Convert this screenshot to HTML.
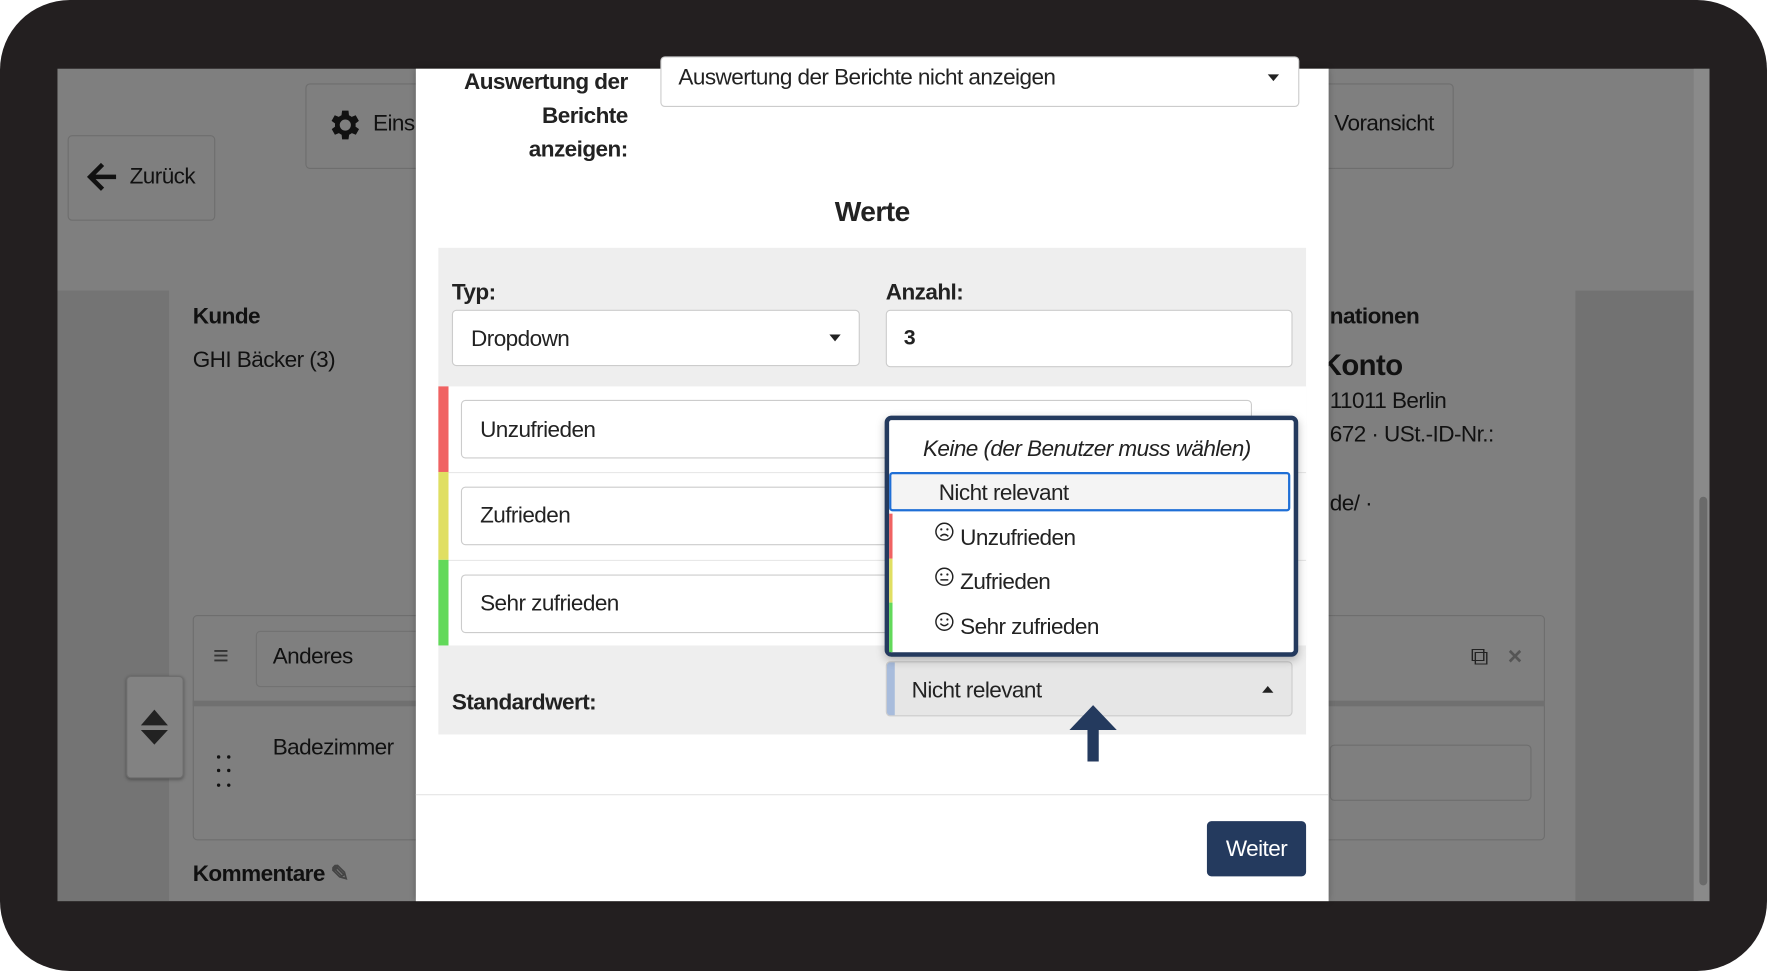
<!DOCTYPE html>
<html><head><meta charset="utf-8"><style>
html,body{margin:0;padding:0;background:#fff;width:1767px;height:971px;overflow:hidden}
#w{position:absolute;left:0;top:0;width:1568px;height:862px;transform:scale(1.12691,1.12645);transform-origin:0 0;font-family:"Liberation Sans",sans-serif;letter-spacing:-0.5px}
.a{position:absolute}
.t{position:absolute;font-size:20px;color:#222;white-space:nowrap;line-height:24px}
.b{font-weight:bold}
.box{position:absolute;border:1px solid #ccc;border-radius:4px;background:#fff;box-sizing:border-box}
.gb{position:absolute;border:1px solid #6e6e6e;border-radius:4px;box-sizing:border-box}
.car{position:absolute;width:0;height:0;border-left:5px solid transparent;border-right:5px solid transparent;border-top:6px solid #222}
.ic{position:absolute;font-family:"DejaVu Sans",sans-serif;font-size:16px;color:#222;line-height:20px}
</style></head><body><div id="w">
<div class="a" style="left:0;top:0;width:1568px;height:862px;background:#231f20;border-radius:62px"></div>
<div class="a" style="left:51px;top:61px;width:1466px;height:739px;background:#7f7f7f;overflow:hidden">
 <div class="a" style="left:0;top:197px;width:99px;height:542px;background:#747474"></div>
 <div class="a" style="left:1347px;top:197px;width:105px;height:542px;background:#727272"></div>
 <div class="a" style="left:1452px;top:0;width:14px;height:739px;background:#8a8a8a"></div>
 <div class="a" style="left:1457px;top:380px;width:7px;height:345px;background:#6a6a6a;border-radius:4px"></div>
</div>
<div class="gb" style="left:60px;top:120px;width:131px;height:76px"></div>
<svg class="a" style="left:76px;top:142px" width="30" height="30" viewBox="0 0 30 30"><path d="M27 15H5M15 4L4 15l11 11" stroke="#111" stroke-width="4" fill="none"/></svg>
<div class="t" style="left:115px;top:145px;color:#111">Zurück</div>
<div class="gb" style="left:271px;top:74px;width:120px;height:76px"></div>
<svg class="a" style="left:288px;top:94px" width="34" height="34" viewBox="0 0 24 24"><path fill="#111" d="M19.4 13a7.5 7.5 0 000-2l2.1-1.6-2-3.5-2.5 1a7 7 0 00-1.7-1L15 3h-4l-.4 2.9a7 7 0 00-1.7 1l-2.5-1-2 3.5L6.6 11a7.5 7.5 0 000 2l-2.1 1.6 2 3.5 2.5-1a7 7 0 001.7 1L11 21h4l.4-2.9a7 7 0 001.7-1l2.5 1 2-3.5zM13 15.5a3.5 3.5 0 110-7 3.5 3.5 0 010 7z"/></svg>
<div class="t" style="left:331px;top:98px;color:#111">Eins</div>
<div class="gb" style="left:1150px;top:74px;width:140px;height:76px"></div>
<div class="t" style="left:1184px;top:98px;color:#111">Voransicht</div>
<div class="t b" style="left:171px;top:269px;color:#111">Kunde</div>
<div class="t" style="left:171px;top:308px;color:#111">GHI Bäcker (3)</div>
<div class="t b" style="left:1180px;top:269px;color:#111">nationen</div>
<div class="t b" style="left:1172px;top:309px;color:#111;font-size:26px;line-height:30px">Konto</div>
<div class="t" style="left:1180px;top:344px;color:#111">11011 Berlin</div>
<div class="t" style="left:1180px;top:374px;color:#111">672 · USt.-ID-Nr.:</div>
<div class="t" style="left:1180px;top:435px;color:#111">de/ ·</div>
<div class="gb" style="left:171px;top:546px;width:1200px;height:200px"></div>
<div class="a" style="left:171px;top:622px;width:1200px;height:5px;background:#707070"></div>
<div class="t" style="left:189px;top:571px;color:#333;font-size:24px">≡</div>
<div class="gb" style="left:227px;top:560px;width:160px;height:50px;border-color:#727272"></div>
<div class="t" style="left:242px;top:571px;color:#111">Anderes</div>
<div class="t" style="left:242px;top:652px;color:#111">Badezimmer</div>
<svg class="a" style="left:192px;top:670px" width="14" height="32"><g fill="#111"><circle cx="2" cy="2" r="1.5"/><circle cx="11" cy="2" r="1.5"/><circle cx="2" cy="14" r="1.5"/><circle cx="11" cy="14" r="1.5"/><circle cx="2" cy="27" r="1.5"/><circle cx="11" cy="27" r="1.5"/></g></svg>
<div class="gb" style="left:1180px;top:661px;width:179px;height:50px"></div>
<div class="t" style="left:1305px;top:571px;color:#222;font-size:22px">⧉</div>
<div class="t b" style="left:1338px;top:571px;color:#555;font-size:22px">×</div>
<div class="gb" style="left:112px;top:600px;width:51px;height:91px;background:#828282;box-shadow:0 1px 3px rgba(0,0,0,.3)"></div>
<svg class="a" style="left:124px;top:628px" width="26" height="36"><path d="M1 16L13 2l12 14zM1 20h24L13 33z" fill="#222"/></svg>
<div class="t b" style="left:171px;top:764px;color:#111">Kommentare <span style="color:#444">✎</span></div>
<div class="a" style="left:369px;top:61px;width:810px;height:739px;background:#fff;box-shadow:0 0 6px rgba(0,0,0,.3)"></div>
<div class="t b" style="left:369px;top:58px;width:188px;text-align:right;line-height:30px">Auswertung der<br>Berichte<br>anzeigen:</div>
<div class="box" style="left:586px;top:50px;width:567px;height:45px"></div>
<div class="t" style="left:602px;top:57px">Auswertung der Berichte nicht anzeigen</div>
<div class="car" style="left:1125px;top:66px"></div>
<div class="t b" style="left:369px;top:174px;width:810px;text-align:center;font-size:25px;line-height:28px">Werte</div>
<div class="a" style="left:389px;top:220px;width:770px;height:432px;background:#eee"></div>
<div class="t b" style="left:401px;top:248px">Typ:</div>
<div class="t b" style="left:786px;top:248px">Anzahl:</div>
<div class="box" style="left:401px;top:275px;width:362px;height:50px"></div>
<div class="t" style="left:418px;top:289px">Dropdown</div>
<div class="car" style="left:736px;top:297px"></div>
<div class="box" style="left:786px;top:275px;width:361px;height:51px"></div>
<div class="t b" style="left:802px;top:289px;font-size:19px">3</div>
<div class="a" style="left:389px;top:343px;width:770px;height:230px;background:#fff"></div>
<div class="a" style="left:389px;top:343px;width:9px;height:76px;background:#f06262"></div>
<div class="a" style="left:389px;top:419px;width:9px;height:78px;background:#e0df62"></div>
<div class="a" style="left:389px;top:497px;width:9px;height:76px;background:#62d95a"></div>
<div class="a" style="left:398px;top:419px;width:761px;height:1px;background:#e8e8e8"></div>
<div class="a" style="left:398px;top:497px;width:761px;height:1px;background:#e8e8e8"></div>
<div class="box" style="left:409px;top:355px;width:702px;height:52px"></div>
<div class="box" style="left:409px;top:432px;width:702px;height:52px"></div>
<div class="box" style="left:409px;top:510px;width:702px;height:52px"></div>
<div class="t" style="left:426px;top:370px">Unzufrieden</div>
<div class="t" style="left:426px;top:446px">Zufrieden</div>
<div class="t" style="left:426px;top:524px">Sehr zufrieden</div>
<div class="t b" style="left:401px;top:612px">Standardwert:</div>
<div class="box" style="left:786px;top:587px;width:361px;height:49px;background:#e6e6e6"></div>
<div class="a" style="left:787px;top:588px;width:7px;height:47px;background:#a8bcdc;border-radius:3px 0 0 3px"></div>
<div class="t" style="left:809px;top:601px">Nicht relevant</div>
<div class="a" style="left:1120px;top:609px;width:0;height:0;border-left:5px solid transparent;border-right:5px solid transparent;border-bottom:6px solid #222"></div>
<svg class="a" style="left:948px;top:625px" width="44" height="52"><path d="M22 1L43 23H27V51H17V23H1z" fill="#243a5e"/></svg>
<div class="a" style="left:785px;top:369px;width:367px;height:214px;box-sizing:border-box;border:4px solid #243a5e;border-radius:6px;background:#fff;box-shadow:0 3px 8px rgba(0,0,0,.25)"></div>
<div class="t" style="left:819px;top:387px;font-style:italic">Keine (der Benutzer muss wählen)</div>
<div class="a" style="left:789px;top:419px;width:356px;height:35px;box-sizing:border-box;border:2px solid #1f6fd6;border-radius:3px;background:#f4f4f4"></div>
<div class="t" style="left:833px;top:426px">Nicht relevant</div>
<div class="a" style="left:789px;top:456px;width:3px;height:40px;background:#f06262"></div>
<div class="a" style="left:789px;top:496px;width:3px;height:39px;background:#e0df62"></div>
<div class="a" style="left:789px;top:535px;width:3px;height:44px;background:#62d95a"></div>
<svg class="a" style="left:829px;top:463px" width="18" height="18" viewBox="0 0 18 18"><g fill="none" stroke="#222" stroke-width="1.3"><circle cx="9" cy="9" r="7.5"/><path d="M5.5 13.2q3.5-3.5 7 0"/></g><circle cx="6.3" cy="7" r="1" fill="#222"/><circle cx="11.7" cy="7" r="1" fill="#222"/></svg>
<svg class="a" style="left:829px;top:503px" width="18" height="18" viewBox="0 0 18 18"><g fill="none" stroke="#222" stroke-width="1.3"><circle cx="9" cy="9" r="7.5"/><path d="M5.5 11.8h7"/></g><circle cx="6.3" cy="7" r="1" fill="#222"/><circle cx="11.7" cy="7" r="1" fill="#222"/></svg>
<svg class="a" style="left:829px;top:543px" width="18" height="18" viewBox="0 0 18 18"><g fill="none" stroke="#222" stroke-width="1.3"><circle cx="9" cy="9" r="7.5"/><path d="M5.5 10.5q3.5 3.8 7 0"/></g><circle cx="6.3" cy="7" r="1" fill="#222"/><circle cx="11.7" cy="7" r="1" fill="#222"/></svg>
<div class="t" style="left:852px;top:466px">Unzufrieden</div>
<div class="t" style="left:852px;top:505px">Zufrieden</div>
<div class="t" style="left:852px;top:545px">Sehr zufrieden</div>
<div class="a" style="left:369px;top:705px;width:810px;height:1px;background:#e5e5e5"></div>
<div class="a" style="left:1071px;top:729px;width:88px;height:49px;background:#243a5e;border-radius:4px"></div>
<div class="t" style="left:1071px;top:742px;width:88px;text-align:center;color:#fff">Weiter</div>
</div></body></html>
